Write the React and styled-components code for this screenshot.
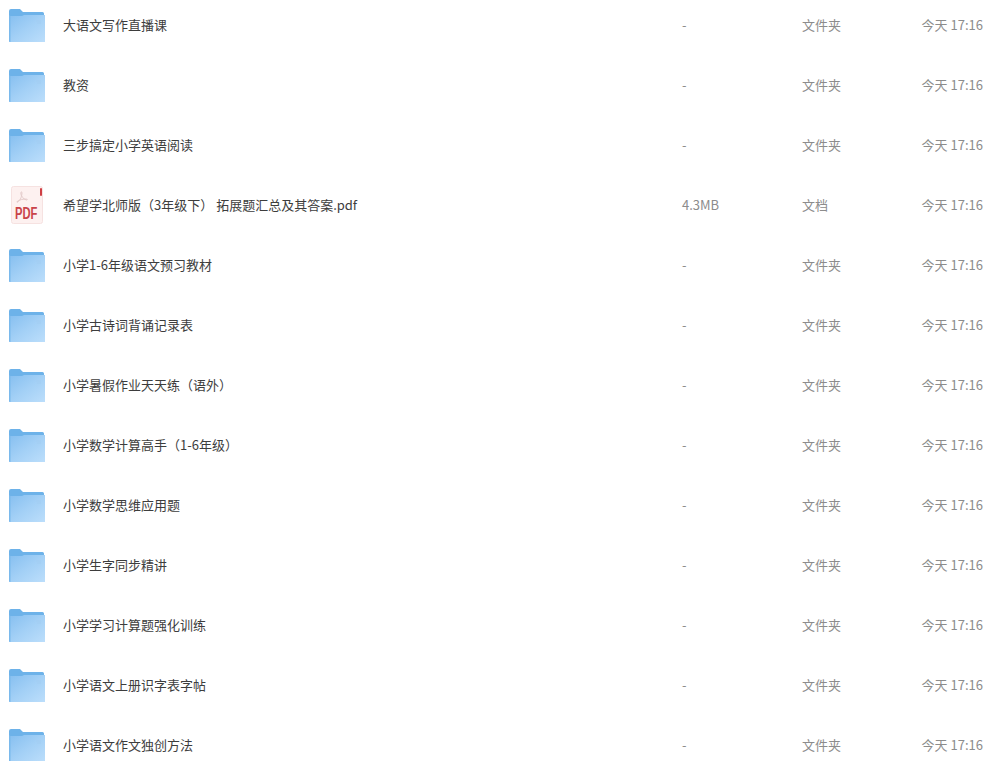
import React from "react"
import styled, { createGlobalStyle } from "styled-components"

const files = [
  { name: "大语文写作直播课" },
  { name: "教资" },
  { name: "三步搞定小学英语阅读" },
  { name: "希望学北师版（3年级下） 拓展题汇总及其答案.pdf", size: "4.3MB", kind: "文档", pdf: true },
  { name: "小学1-6年级语文预习教材" },
  { name: "小学古诗词背诵记录表" },
  { name: "小学暑假作业天天练（语外）" },
  { name: "小学数学计算高手（1-6年级）" },
  { name: "小学数学思维应用题" },
  { name: "小学生字同步精讲" },
  { name: "小学学习计算题强化训练" },
  { name: "小学语文上册识字表字帖" },
  { name: "小学语文作文独创方法" },
]

const FolderIcon = () => (
  <svg width="36" height="33" viewBox="0 0 36 33">
    <defs>
      <linearGradient id="folderFront" x1="0" y1="0" x2="1" y2="1">
        <stop offset="0" stopColor="#86bff0" />
        <stop offset="0.5" stopColor="#a3d0f6" />
        <stop offset="1" stopColor="#bcdefb" />
      </linearGradient>
    </defs>
    <path d="M0 2a2 2 0 0 1 2-2h9l3 3h19.500a1.500 1.500 0 0 1 1.500 1.500V8H0z" fill="#6db2e9" />
    <path d="M1 33a1 1 0 0 1-1-1V7h13l2-1h21v27z" fill="url(#folderFront)" />
    <path d="M0 32V6l1.500 1v26H1a1 1 0 0 1-1-1z" fill="#7ab9ec" />
    <path d="M27 12h5M28 14h4" stroke="#a2cdf2" strokeWidth="1" />
  </svg>
)

const PdfIcon = () => (
  <svg width="32" height="38" viewBox="0 0 32 38">
    <rect x="0.5" y="0.5" width="31" height="37" rx="2" fill="#fdf1f0" stroke="#f6e2e1" />
    <rect x="29" y="2" width="2" height="8" rx="1" fill="#cf3f45" />
    <path d="M6 16c3-1 4.500-4 5-9 .1-1.500-1.200-1.500-1.200 0 0 3 2.500 6 5.500 7 1.200.3 1.500-.8 0-.9-3-.3-6.500.6-9 2.300-.8.7-.3 1 .2.600z" fill="none" stroke="#e4cccb" strokeWidth="1" />
    <PdfLabel transform="translate(4 33) scale(0.8 1.2)" x="0" y="0">PDF</PdfLabel>
  </svg>
)

const App = () => (
  <>
    <GlobalStyle />
    <List>
      {files.map(file => (
        <Row key={file.name}>
          <IconCell $pdf={file.pdf}>{file.pdf ? <PdfIcon /> : <FolderIcon />}</IconCell>
          <Name>{file.name}</Name>
          <Meta>{file.size || "-"}</Meta>
          <Meta>{file.kind || "文件夹"}</Meta>
          <Time>今天 17:16</Time>
        </Row>
      ))}
    </List>
  </>
)

export default App

const GlobalStyle = createGlobalStyle`
  html, body {
    margin: 0;
    height: 100%;
    overflow: hidden;
    background: #fff;
  }
`

const List = styled.div`
  margin-top: -5px;
  font-family: "Noto Sans CJK SC", "Noto Sans", sans-serif;
  font-size: 13px;
`

const Row = styled.div`
  display: grid;
  grid-template-columns: 54px 619px 120px 1fr auto;
  align-items: center;
  height: 60px;
  padding: 0 11px 0 9px;
`

const IconCell = styled.div`
  display: flex;
  align-items: center;
  padding-top: ${({ $pdf }) => ($pdf ? "0" : "1px")};
  padding-bottom: ${({ $pdf }) => ($pdf ? "1px" : "0")};
  padding-left: ${({ $pdf }) => ($pdf ? "2px" : "0")};
`

const Name = styled.div`
  color: #3d3d3d;
  white-space: nowrap;
  padding-bottom: 2px;
`

const Meta = styled.div`
  color: #8c8c8c;
  padding-bottom: 2px;
`

const Time = styled.div`
  color: #8c8c8c;
  white-space: nowrap;
  padding-bottom: 2px;
`

const PdfLabel = styled.text`
  font-family: "Liberation Sans", sans-serif;
  font-size: 14px;
  font-weight: 700;
  fill: #c9434a;
`
